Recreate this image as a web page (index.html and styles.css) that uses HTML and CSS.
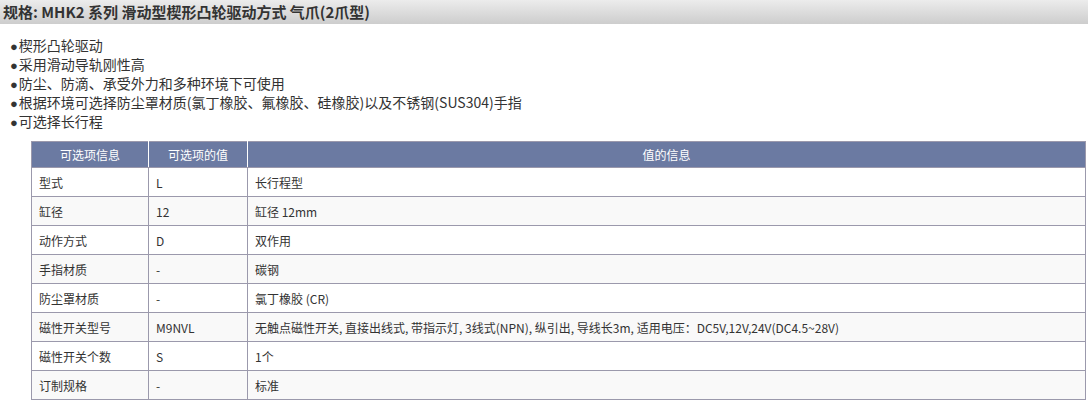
FILE: index.html
```html
<!DOCTYPE html>
<html lang="zh-CN">

<head>
    <meta charset="UTF-8">
    <meta name="viewport" content="width=device-width, initial-scale=1.0">
    <title>MHK2 系列</title>
    <link rel="stylesheet" href="styles.css">
</head>

<body>
    <div class="spec-title">规格: MHK2 系列 滑动型楔形凸轮驱动方式 气爪(2爪型)</div>

    <ul class="features">
        <li><span class="dot">●</span>楔形凸轮驱动</li>
        <li><span class="dot">●</span>采用滑动导轨刚性高</li>
        <li><span class="dot">●</span>防尘、防滴、承受外力和多种环境下可使用</li>
        <li><span class="dot">●</span>根据环境可选择防尘罩材质(氯丁橡胶、氟橡胶、硅橡胶)以及不锈钢(SUS304)手指</li>
        <li><span class="dot">●</span>可选择长行程</li>
    </ul>

    <table class="options">
        <thead>
            <tr>
                <th class="col-name">可选项信息</th>
                <th class="col-value">可选项的值</th>
                <th>值的信息</th>
            </tr>
        </thead>
        <tbody>
            <tr><td>型式</td><td>L</td><td>长行程型</td></tr>
            <tr><td>缸径</td><td>12</td><td>缸径 12mm</td></tr>
            <tr><td>动作方式</td><td>D</td><td>双作用</td></tr>
            <tr><td>手指材质</td><td>-</td><td>碳钢</td></tr>
            <tr><td>防尘罩材质</td><td>-</td><td>氯丁橡胶 (CR)</td></tr>
            <tr><td>磁性开关型号</td><td>M9NVL</td><td>无触点磁性开关, 直接出线式, 带指示灯, 3线式(NPN), 纵引出, 导线长3m, 适用电压：DC5V,12V,24V(DC4.5~28V)</td></tr>
            <tr><td>磁性开关个数</td><td>S</td><td>1个</td></tr>
            <tr><td>订制规格</td><td>-</td><td>标准</td></tr>
        </tbody>
    </table>
</body>

</html>
```

FILE: styles.css
```css
body {
    margin: 0;
    font-family: "Noto Sans CJK SC", "Liberation Sans", sans-serif;
    color: #333;
    background-color: #fff;
}

/* Title bar */
.spec-title {
    height: 24px;
    line-height: 24px;
    padding-left: 3px;
    font-size: 15px;
    font-weight: bold;
    color: #333;
    background: linear-gradient(to bottom, #ececec, #cdcdcd);
}

/* Feature list */
.features {
    list-style: none;
    margin: 12px 0 0 0;
    padding: 0 0 0 10px;
    font-size: 14px;
    line-height: 19px;
}

.features li {
    height: 19px;
}

.features .dot {
    font-family: "Liberation Sans", "DejaVu Sans", sans-serif;
    font-size: 13px;
    line-height: 1;
    margin-right: 1px;
}

/* Options table */
.options {
    border-collapse: collapse;
    margin: 10px 0 0 31px;
    width: 1055px;
    font-size: 12px;
    color: #333;
}

.options th {
    background-color: #6b7aa2;
    color: #fff;
    font-weight: normal;
    height: 25px;
    padding: 0;
    text-align: center;
    border: 1px solid #9b99ac;
    border-left-color: #fff;
    border-right-color: #fff;
}

.options th:first-child {
    border-left-color: #9b99ac;
}

.options th:last-child {
    border-right-color: #9b99ac;
}

.options .col-name {
    width: 116px;
}

.options .col-value {
    width: 98px;
}

.options td {
    height: 28px;
    padding: 0 7px;
    border: 1px solid #9b99ac;
}

.options tbody tr:nth-child(even) {
    background-color: #f9f9f9;
}
```
